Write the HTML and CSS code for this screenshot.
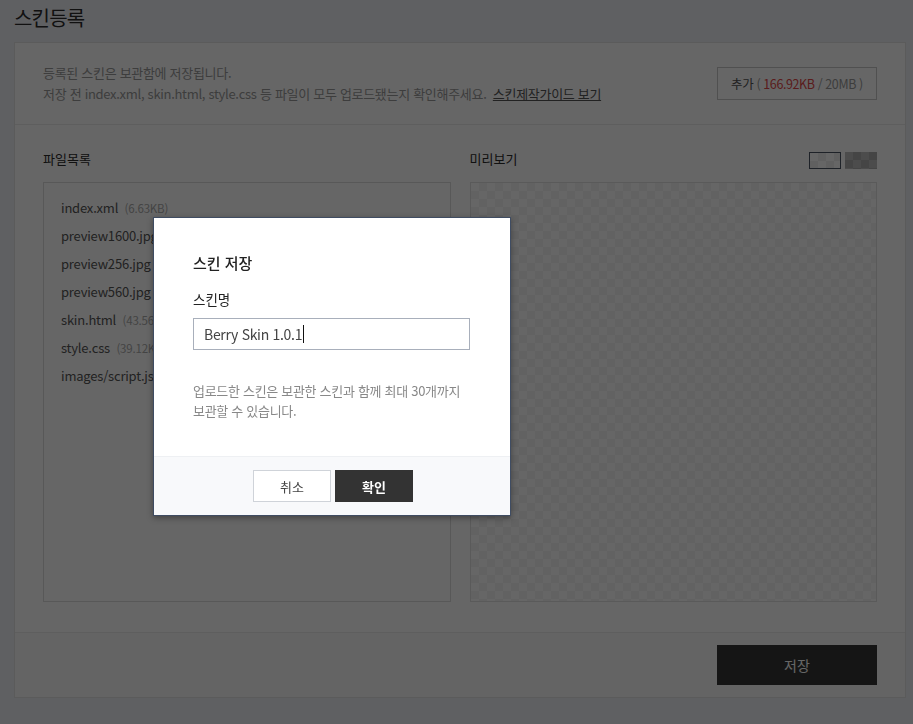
FILE: index.html
```html
<!DOCTYPE html>
<html lang="ko">
<head>
<meta charset="utf-8">
<title>스킨등록</title>
<link rel="stylesheet" href="styles.css">
</head>
<body>
<div class="page">
  <h1 class="page-title">스킨등록</h1>
  <div class="card">
    <div class="info">
      <div class="info-text">
        <p>등록된 스킨은 보관함에 저장됩니다.</p>
        <p>저장 전 index.xml, skin.html, style.css 등 파일이 모두 업로드됐는지 확인해주세요. <a class="guide" href="#">스킨제작가이드 보기</a></p>
      </div>
      <button class="add-btn">추가 <span class="paren">(</span> <span class="used">166.92KB</span> <span class="total">/ 20MB</span> <span class="paren">)</span></button>
    </div>
    <div class="columns">
      <div class="col">
        <div class="col-head"><span class="col-title">파일목록</span></div>
        <ul class="file-list">
          <li>index.xml <span class="size">(6.63KB)</span></li>
          <li>preview1600.jpg <span class="size">(120.11KB)</span></li>
          <li>preview256.jpg <span class="size">(12.34KB)</span></li>
          <li>preview560.jpg <span class="size">(30.52KB)</span></li>
          <li>skin.html <span class="size">(43.56KB)</span></li>
          <li>style.css <span class="size">(39.12KB)</span></li>
          <li>images/script.js <span class="size">(2.18KB)</span></li>
        </ul>
      </div>
      <div class="col">
        <div class="col-head">
          <span class="col-title">미리보기</span>
          <div class="toggles">
            <span class="toggle toggle-light"></span>
            <span class="toggle toggle-dark"></span>
          </div>
        </div>
        <div class="preview"></div>
      </div>
    </div>
    <div class="actions">
      <button class="save-btn">저장</button>
    </div>
  </div>
</div>

<div class="dim"></div>

<div class="modal">
  <div class="modal-body">
    <h2 class="modal-title">스킨 저장</h2>
    <label class="field-label">스킨명</label>
    <div class="field"><span class="field-value">Berry Skin 1.0.1</span><span class="caret"></span></div>
    <p class="modal-desc">업로드한 스킨은 보관한 스킨과 함께 최대 30개까지<br>보관할 수 있습니다.</p>
  </div>
  <div class="modal-foot">
    <button class="btn-cancel">취소</button>
    <button class="btn-ok">확인</button>
  </div>
</div>
</body>
</html>
```

FILE: styles.css
```css
* { box-sizing: border-box; }
html, body { margin: 0; padding: 0; }
body {
  background: #eef0f6;
  font-family: "Noto Sans CJK KR", "Noto Sans", sans-serif;
  color: #333;
  width: 913px;
  height: 724px;
  overflow: hidden;
}
.page { padding: 0 7px 0 14px; }
.page-title {
  margin: 0;
  height: 42px;
  font-size: 20px;
  font-weight: 400;
  line-height: 36px;
  color: #2b2b2b;
  letter-spacing: -0.8px;
}
.card {
  background: #fff;
  border: 1px solid #e3e3e3;
  height: 656px;
  display: flex;
  flex-direction: column;
}
.info {
  height: 82px;
  border-bottom: 1px solid #ececec;
  display: flex;
  align-items: center;
  justify-content: space-between;
  padding: 0 28px 0 28px;
}
.info-text { margin-top: -2px; }
.info-text p {
  margin: 0;
  font-size: 13px;
  line-height: 21px;
  color: #999;
  letter-spacing: -0.3px;
}
.guide { color: #555; text-decoration: underline; margin-left: 3px; }
.add-btn {
  width: 160px;
  height: 33px;
  background: #fff;
  border: 1px solid #c9c9c9;
  font-family: inherit;
  font-size: 12.5px;
  color: #555;
  padding: 0;
  margin-top: 0;
  letter-spacing: -0.4px;
}
.add-btn .paren { color: #999; }
.add-btn .used { color: #e24848; }
.add-btn .total { color: #999; }
.columns {
  flex: 1;
  display: flex;
  gap: 19px;
  padding: 0 28px 30px 28px;
  border-bottom: 1px solid #ececec;
}
.col { flex: 1; display: flex; flex-direction: column; }
.col-head {
  height: 57px;
  display: flex;
  align-items: center;
  justify-content: space-between;
  padding-top: 12px;
}
.col-title { font-size: 13px; color: #2b2b2b; position: relative; top: -1px; }
.toggles { display: flex; gap: 4px; margin-top: 1px; }
.toggle { display: block; width: 32px; height: 17px; }
.toggle-light {
  border: 1px solid #4c5565;
  background-color: #fff;
  background-image:
    linear-gradient(45deg, #f1f1f1 25%, transparent 25%, transparent 75%, #f1f1f1 75%),
    linear-gradient(45deg, #f1f1f1 25%, transparent 25%, transparent 75%, #f1f1f1 75%);
  background-size: 16px 16px;
  background-position: 0 0, 8px 8px;
}
.toggle-dark {
  background-color: #bdbdbd;
  background-image:
    linear-gradient(45deg, #adadad 25%, transparent 25%, transparent 75%, #adadad 75%),
    linear-gradient(45deg, #adadad 25%, transparent 25%, transparent 75%, #adadad 75%);
  background-size: 16px 16px;
  background-position: 0 0, 8px 8px;
}
.file-list {
  flex: 1;
  list-style: none;
  margin: 0;
  padding: 11px 17px;
  border: 1px solid #dcdcdc;
}
.file-list li {
  font-size: 13px;
  line-height: 28px;
  color: #555;
  letter-spacing: -0.2px;
}
.file-list .size { font-size: 11.5px; color: #aaa; margin-left: 3px; }
.preview {
  flex: 1;
  border: 1px solid #e2e2e2;
  background-color: #fff;
  background-image:
    linear-gradient(45deg, #f5f5f5 25%, transparent 25%, transparent 75%, #f5f5f5 75%),
    linear-gradient(45deg, #f5f5f5 25%, transparent 25%, transparent 75%, #f5f5f5 75%);
  background-size: 16px 16px;
  background-position: 0 0, 8px 8px;
}
.actions {
  height: 64px;
  background: #fbfbfb;
  display: flex;
  justify-content: flex-end;
  align-items: center;
  padding-right: 28px;
}
.save-btn {
  width: 160px;
  height: 40px;
  border: 0;
  background: #363636;
  color: #fff;
  font-family: inherit;
  font-size: 14px;
}
.dim {
  position: fixed;
  inset: 0;
  background: rgba(0, 0, 0, 0.6);
}
.modal {
  position: absolute;
  left: 153px;
  top: 217px;
  width: 358px;
  height: 299px;
  background: #fff;
  border: 1px solid #3f4c62;
  box-shadow: 0 2px 6px rgba(0,0,0,0.35);
  display: flex;
  flex-direction: column;
}
.modal-body { flex: 1; padding: 34px 40px 0 39px; }
.modal-title {
  margin: 0;
  font-size: 15px;
  font-weight: 500;
  color: #222;
  line-height: 22px;
}
.field-label {
  display: block;
  margin-top: 15px;
  font-size: 13.5px;
  color: #222;
  line-height: 20px;
}
.field {
  margin-top: 9px;
  height: 32px;
  border: 1px solid #a8afbb;
  display: flex;
  align-items: center;
  padding-left: 10px;
}
.field-value { font-size: 14px; color: #444; letter-spacing: -0.3px; }
.caret { display: block; width: 1px; height: 18px; background: #111; margin-left: 1px; }
.modal-desc {
  margin: 31px 0 0;
  font-size: 13px;
  line-height: 20px;
  color: #888;
  letter-spacing: -0.3px;
}
.modal-foot {
  height: 59px;
  background: #f8f9fb;
  border-top: 1px solid #eef0f3;
  display: flex;
  justify-content: center;
  align-items: center;
  gap: 4px;
  padding-left: 2px;
}
.btn-cancel, .btn-ok {
  width: 78px;
  height: 32px;
  font-family: inherit;
  font-size: 13px;
  padding: 0;
}
.btn-cancel { background: #fff; border: 1px solid #cfd3d9; color: #444; }
.btn-ok { background: #333; border: 0; color: #fff; font-weight: 700; }
```
